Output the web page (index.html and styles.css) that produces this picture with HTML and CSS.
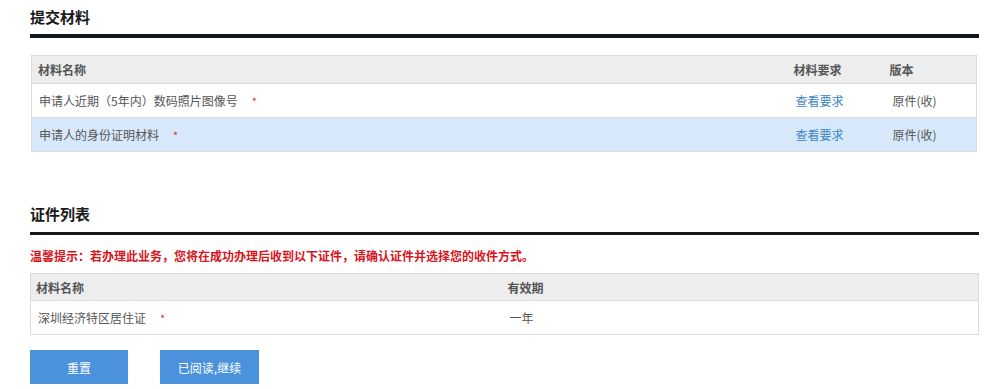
FILE: index.html
```html
<!DOCTYPE html>
<html lang="zh">
<head>
<meta charset="utf-8">
<link rel="stylesheet" href="styles.css">
</head>
<body>
<div class="page">
  <section class="sec sec1">
    <h2 class="title">提交材料</h2>
    <div class="bar"></div>
    <table class="tbl t1">
      <colgroup><col class="c-name"><col class="c-req"><col class="c-ver"></colgroup>
      <thead><tr><th>材料名称</th><th>材料要求</th><th>版本</th></tr></thead>
      <tbody>
        <tr><td>申请人近期（5年内）数码照片图像号<span class="req">*</span></td><td><a class="link">查看要求</a></td><td>原件(收)</td></tr>
        <tr class="hl"><td>申请人的身份证明材料<span class="req">*</span></td><td><a class="link">查看要求</a></td><td>原件(收)</td></tr>
      </tbody>
    </table>
  </section>
  <section class="sec sec2">
    <h2 class="title">证件列表</h2>
    <div class="bar"></div>
    <p class="notice">温馨提示：若办理此业务，您将在成功办理后收到以下证件，请确认证件并选择您的收件方式。</p>
    <table class="tbl t2">
      <colgroup><col class="c2-name"><col></colgroup>
      <thead><tr><th>材料名称</th><th>有效期</th></tr></thead>
      <tbody>
        <tr><td>深圳经济特区居住证<span class="req">*</span></td><td>一年</td></tr>
      </tbody>
    </table>
  </section>
  <div class="actions">
    <button class="btn">重置</button>
    <button class="btn">已阅读,继续</button>
  </div>
</div>
</body>
</html>
```
FILE: styles.css
```css
* { box-sizing: border-box; }
html, body { margin: 0; padding: 0; background: #fff; }
body { font-family: "Microsoft YaHei", "Noto Sans CJK SC", "Liberation Sans", sans-serif; font-size: 12px; color: #555; }
.page { padding: 0 21px 0 30px; width: 1000px; }
.title { margin: 0; font-size: 15px; font-weight: bold; color: #1a1a1a; line-height: 20px; }
.sec1 { padding-top: 7px; }
.sec1 .bar { margin-top: 7px; height: 4px; background: #14171c; }
.sec2 { padding-top: 52px; }
.sec2 .bar { margin-top: 8px; width: 949px; height: 3px; background: #14171c; }
.tbl { border-collapse: collapse; table-layout: fixed; border: 1px solid #dcdcdc; }
.t1 { margin-top: 17px; margin-left: 1px; width: 946px; }
.t2 { width: 949px; }
.tbl th, .tbl td { text-align: left; padding: 0 0 0 6px; border-bottom: 1px solid #dcdcdc; white-space: nowrap; }
.tbl th { background: #ededed; color: #555; font-weight: bold; font-size: 12px; height: 28px; }
.t1 td { height: 34px; color: #555; }
.t1 .c-name { width: 756px; }
.t1 .c-req { width: 96px; }
.t1 td:first-child, .t2 td:first-child { padding-left: 7px; }
.t1 td:nth-child(3) { padding-left: 9px; }
.t1 td:nth-child(2) { padding-left: 8px; }
.hl td { background: #d8e8fb; }
.link { color: #3a86c8; text-decoration: none; }
.req { color: #e0303a; margin-left: 14px; font-size: 11px; }
.notice { margin: 11px 0 0; color: #d7141c; font-weight: bold; font-size: 12px; line-height: 20px; height: 27px; }
.t2 .c2-name { width: 472px; }
.t2 th { height: 27px; padding-left: 5px; }
.t2 td { height: 34px; color: #555; }
.t2 td:nth-child(2) { padding-left: 7px; }
.actions { display: flex; gap: 32px; margin-top: 15px; }
.btn { width: 98px; height: 34px; border: 0; background: #4a92dc; color: #fff; font-family: inherit; font-size: 12px; padding: 0; }
.btn + .btn { width: 99px; }
```
